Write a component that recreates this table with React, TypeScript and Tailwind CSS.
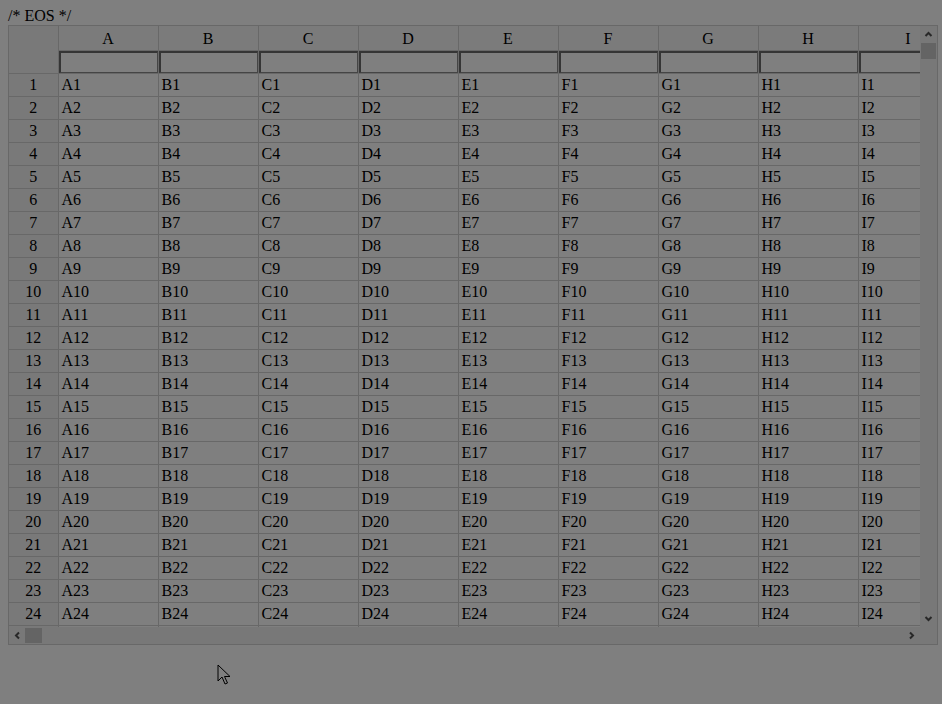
const COLS = ['A', 'B', 'C', 'D', 'E', 'F', 'G', 'H', 'I']
const ROWS = Array.from({ length: 24 }, (_, i) => i + 1)

function Chevron({ dir }: { dir: 'up' | 'down' | 'left' | 'right' }) {
  const d = {
    up: 'M1.5 6 L4.5 3 L7.5 6',
    down: 'M1.5 3 L4.5 6 L7.5 3',
    left: 'M6 1.5 L3 4.5 L6 7.5',
    right: 'M3 1.5 L6 4.5 L3 7.5',
  }[dir]
  return (
    <svg width="9" height="9" viewBox="0 0 9 9">
      <path d={d} fill="none" stroke="#505050" strokeWidth="2" />
    </svg>
  )
}

function Cursor() {
  return (
    <svg width="14" height="22" viewBox="0 0 14 22" className="absolute left-[217px] top-[664px]">
      <path d="M1 1 L1 17 L5 13 L8 20 L10.5 19 L7.5 12.5 L13 12.5 Z" fill="#fff" stroke="#000" strokeWidth="1" strokeLinejoin="round" />
    </svg>
  )
}

export default function App() {
  return (
    <div className="relative min-h-screen bg-white p-2 font-['Liberation_Serif',serif] text-base text-black">
      <div className="-mt-[1px] leading-[18px]">/* EOS */</div>

      {/* grid viewport with scrollbars */}
      <div className="flex h-[620px] w-[930px] flex-col border border-[#d0d0d0]">
        <div className="flex min-h-0 flex-1">
          <div className="min-w-0 flex-1 overflow-hidden">
            <table className="w-[949px] table-fixed border-collapse">
              <colgroup>
                <col className="w-[49px]" />
                {COLS.map(c => (
                  <col key={c} className="w-[100px]" />
                ))}
              </colgroup>
              <thead>
                <tr className="h-[24px] bg-[#f6f6f6]">
                  <th rowSpan={2} className="border border-[#d0d0d0] border-t-0 border-l-0 bg-[#f3f3f3]" />
                  {COLS.map(c => (
                    <th key={c} className="border border-[#d0d0d0] border-t-0 pt-[2px] text-center font-normal leading-none">
                      {c}
                    </th>
                  ))}
                </tr>
                <tr className="h-[23px] bg-[#f6f6f6]">
                  {COLS.map(c => (
                    <th key={c} className="border border-[#d0d0d0] p-0 align-top">
                      <div className="h-[22px] border border-[#8a8a8a] border-t-2 border-l-2 border-t-[#6a6a6a] border-l-[#6a6a6a] bg-white" />
                    </th>
                  ))}
                </tr>
              </thead>
              <tbody>
                {ROWS.map(r => (
                  <tr key={r} className="h-[23px]">
                    <td className="border border-[#d0d0d0] border-l-0 bg-[#f3f3f3] text-center leading-none">{r}</td>
                    {COLS.map(c => (
                      <td key={c} className="border border-[#d0d0d0] px-[3px] leading-none whitespace-nowrap">
                        {c}
                        {r}
                      </td>
                    ))}
                  </tr>
                ))}
                <tr className="h-[23px]">
                  <td className="border border-[#d0d0d0] border-l-0 bg-[#f3f3f3]" />
                  {COLS.map(c => (
                    <td key={c} className="border border-[#d0d0d0]" />
                  ))}
                </tr>
              </tbody>
            </table>
          </div>

          {/* vertical scrollbar */}
          <div className="flex w-[17px] flex-col bg-[#f1f1f1]">
            <div className="flex h-[17px] items-center justify-center">
              <Chevron dir="up" />
            </div>
            <div className="mx-[1px] h-[16px] bg-[#c8c8c8]" />
            <div className="flex-1" />
            <div className="flex h-[17px] items-center justify-center">
              <Chevron dir="down" />
            </div>
          </div>
        </div>

        {/* horizontal scrollbar */}
        <div className="flex h-[17px] bg-[#f1f1f1]">
          <div className="flex w-[16px] items-center justify-center">
            <Chevron dir="left" />
          </div>
          <div className="my-[1px] w-[17px] bg-[#c8c8c8]" />
          <div className="flex-1" />
          <div className="flex w-[17px] items-center justify-center">
            <Chevron dir="right" />
          </div>
          <div className="w-[17px] bg-[#f1f1f1]" />
        </div>
      </div>

      <Cursor />

      {/* dimming overlay */}
      <div className="pointer-events-none fixed inset-0 bg-black/50" />
    </div>
  )
}
